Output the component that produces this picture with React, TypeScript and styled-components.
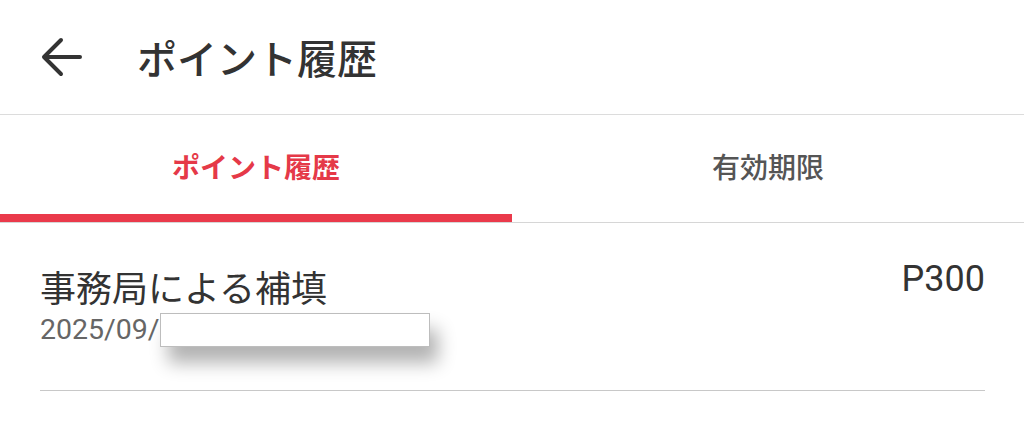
import React from "react";
import styled, { createGlobalStyle } from "styled-components";

const GlobalStyle = createGlobalStyle`
  html, body {
    margin: 0;
    padding: 0;
    background: #ffffff;
    font-family: Roboto, "Noto Sans CJK JP", sans-serif;
  }
`;

const Header = styled.header`
  display: flex;
  align-items: center;
  height: 114px;
  padding-left: 41px;
  border-bottom: 1px solid #dcdcdc;
  box-sizing: content-box;
`;

const BackButton = styled.button`
  display: flex;
  align-items: center;
  justify-content: center;
  width: 42px;
  height: 42px;
  padding: 0;
  margin-right: 54px;
  border: none;
  background: none;
  cursor: pointer;
`;

const Title = styled.h1`
  margin: 0;
  font-size: 40px;
  font-weight: 500;
  color: #333333;
  font-family: "Noto Sans CJK JP", sans-serif;
`;

const Tabs = styled.nav`
  display: grid;
  grid-template-columns: 1fr 1fr;
  border-bottom: 1px solid #d6d6d6;
`;

const Tab = styled.div<{ $active?: boolean }>`
  display: flex;
  align-items: center;
  justify-content: center;
  height: 97px;
  border-bottom: 8px solid ${({ $active }) => ($active ? "#ea3a4b" : "transparent")};
  font-family: "Noto Sans CJK JP", sans-serif;
  font-size: 28px;
  font-weight: ${({ $active }) => ($active ? 700 : 500)};
  color: ${({ $active }) => ($active ? "#e53948" : "#555555")};
  padding-top: 2px;
`;

const List = styled.ul`
  list-style: none;
  margin: 0;
  padding: 0 39px 0 40px;
`;

const Row = styled.li`
  display: flex;
  justify-content: space-between;
  align-items: flex-start;
  padding: 40px 0 42px;
  border-bottom: 1px solid #c8c8c8;
`;

const RowMain = styled.div`
  display: flex;
  flex-direction: column;
`;

const RowTitle = styled.div`
  font-family: "Noto Sans CJK JP", sans-serif;
  font-size: 36px;
  line-height: 46px;
  color: #333333;
`;

const RowDate = styled.div`
  display: flex;
  align-items: center;
  margin-top: 3px;
  font-family: Roboto, sans-serif;
  font-size: 28.5px;
  line-height: 36px;
  color: #666666;
`;

const Redaction = styled.span`
  display: inline-block;
  width: 268px;
  height: 32px;
  background: #ffffff;
  border: 1px solid #bdbdbd;
  box-shadow: 8px 16px 18px rgba(0, 0, 0, 0.3);
`;

const Points = styled.div`
  font-family: Roboto, sans-serif;
  font-size: 36px;
  line-height: 36px;
  color: #333333;
  margin-top: -2px;
`;

const BackArrow = () => (
  <svg width="42" height="42" viewBox="0 0 42 42" fill="none">
    <path
      d="M39 21H4M20 4L3 21L20 38"
      stroke="#333333"
      strokeWidth="4"
      strokeLinecap="round"
      strokeLinejoin="round"
    />
  </svg>
);

export default function App() {
  return (
    <>
      <GlobalStyle />
      <Header>
        <BackButton aria-label="戻る">
          <BackArrow />
        </BackButton>
        <Title>ポイント履歴</Title>
      </Header>
      <Tabs>
        <Tab $active>ポイント履歴</Tab>
        <Tab>有効期限</Tab>
      </Tabs>
      <List>
        <Row>
          <RowMain>
            <RowTitle>事務局による補填</RowTitle>
            <RowDate>
              2025/09/
              <Redaction />
            </RowDate>
          </RowMain>
          <Points>P300</Points>
        </Row>
      </List>
    </>
  );
}
